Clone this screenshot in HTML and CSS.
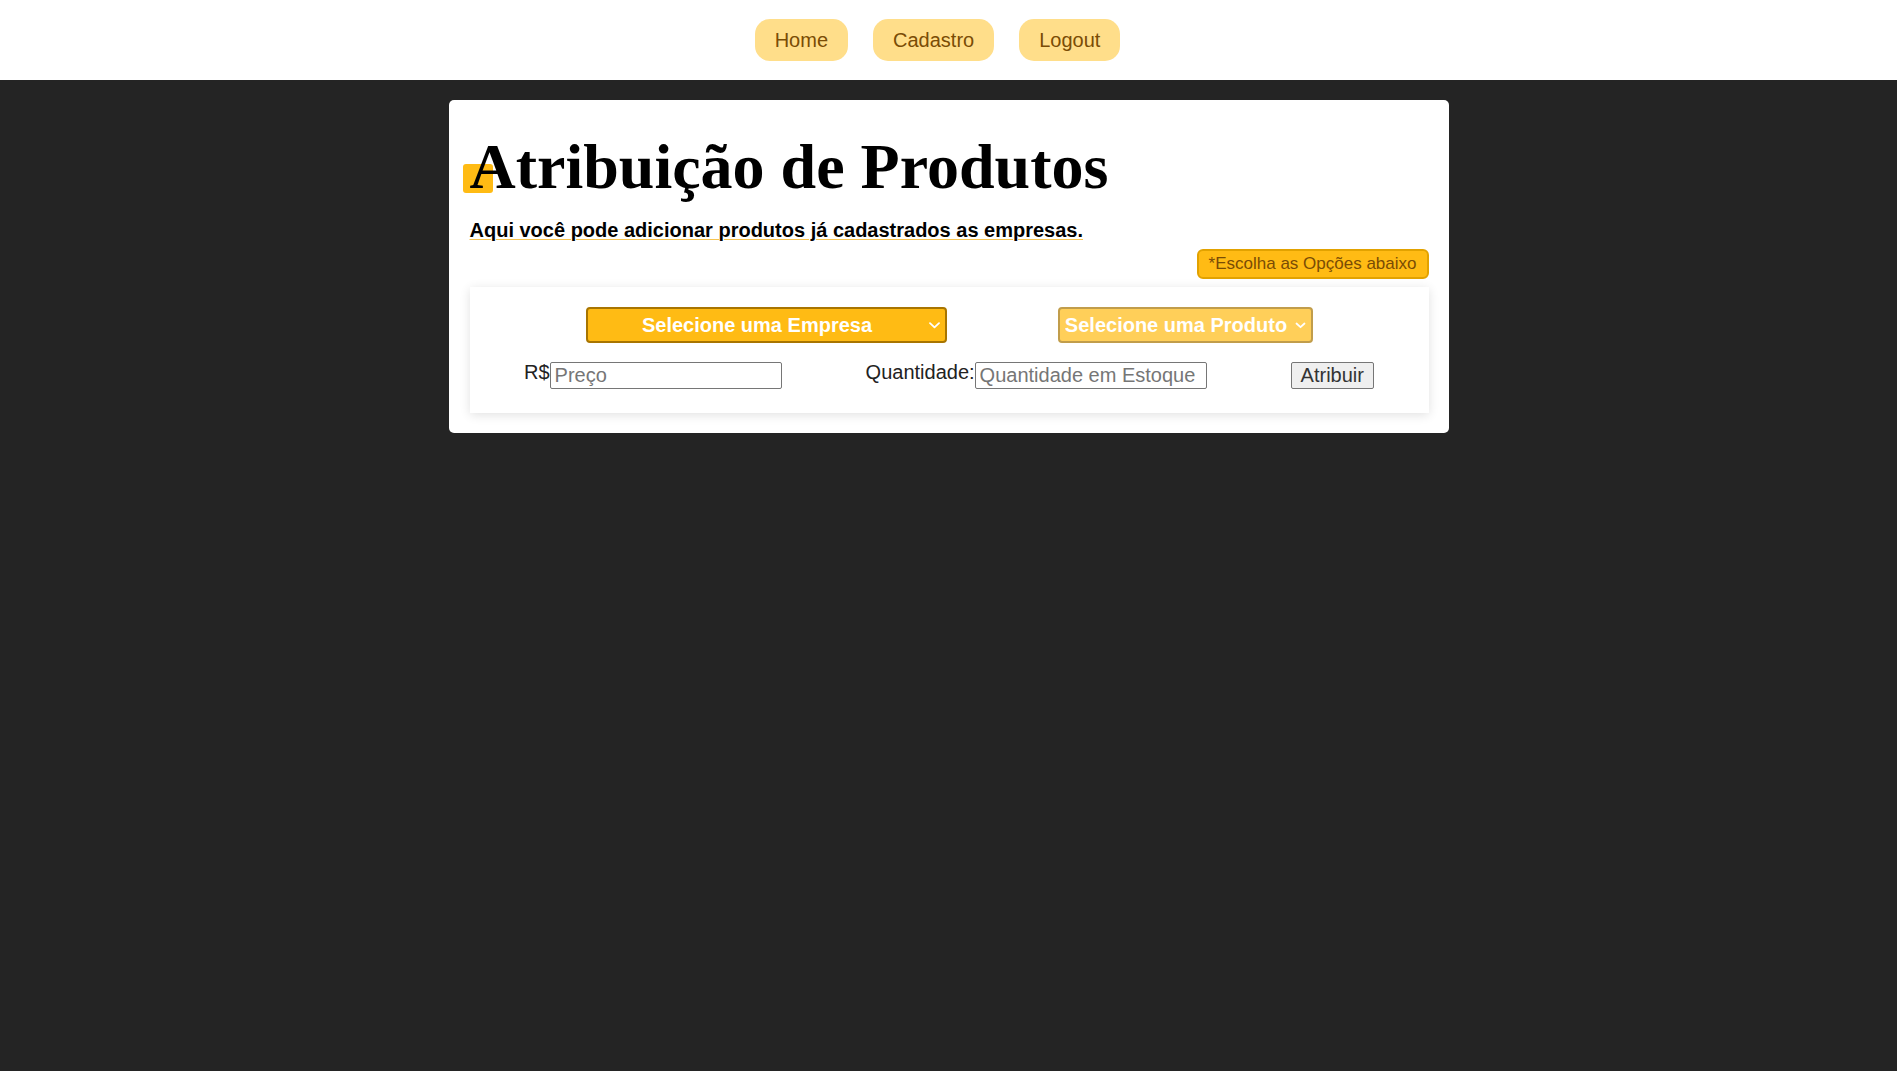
FILE: index.html
```
<!DOCTYPE html>
<html lang="pt-BR">
<head>
<meta charset="utf-8">
<title>Atribuição de Produtos</title>
<link rel="stylesheet" href="styles.css">
</head>
<body>
<header class="topbar">
  <nav class="nav">
    <a class="nav-btn" href="#">Home</a>
    <a class="nav-btn" href="#">Cadastro</a>
    <a class="nav-btn" href="#">Logout</a>
  </nav>
</header>
<main class="card">
  <h1 class="title">Atribuição de Produtos</h1>
  <p class="subtitle">Aqui você pode adicionar produtos já cadastrados as empresas.</p>
  <div class="hint-row"><span class="hint">*Escolha as Opções abaixo</span></div>
  <section class="panel">
    <div class="row row-selects">
      <div class="select-wrap select-wrap-wide">
        <select class="select">
          <option>Selecione uma Empresa</option>
        </select>
        <svg class="chevron" width="11" height="7" viewBox="0 0 11 7"><path d="M1 1.2 L5.5 5.4 L10 1.2" fill="none" stroke="#fff" stroke-width="1.8" stroke-linecap="round" stroke-linejoin="round"/></svg>
      </div>
      <div class="select-wrap select-wrap-disabled">
        <select class="select" disabled>
          <option>Selecione uma Produto</option>
        </select>
        <svg class="chevron" width="11" height="7" viewBox="0 0 11 7"><path d="M1.5 1.5 L5.5 5.2 L9.5 1.5" fill="none" stroke="#fff" stroke-width="1.8" stroke-linecap="round" stroke-linejoin="round"/></svg>
      </div>
    </div>
    <div class="row row-inputs">
      <div class="field"><span class="label">R$</span><input class="input" type="text" placeholder="Preço"></div>
      <div class="field"><span class="label">Quantidade:</span><input class="input" type="text" placeholder="Quantidade em Estoque"></div>
      <button class="btn" type="button">Atribuir</button>
    </div>
  </section>
</main>
</body>
</html>
```
FILE: styles.css
```
* { box-sizing: border-box; }

html, body {
  margin: 0;
  padding: 0;
}

body {
  background: #242424;
  font-family: "Liberation Sans", Arial, sans-serif;
  color: #222;
  min-height: 1071px;
}

.topbar {
  background: #fff;
  height: 80px;
  display: flex;
  align-items: center;
  justify-content: center;
}

.nav {
  display: flex;
  justify-content: center;
  padding-left: 3px;
}

.nav-btn {
  display: block;
  margin-right: 25px;
  padding: 0 20px;
  height: 42px;
  line-height: 42px;
  font-size: 20px;
  color: #7a4c05;
  background: #ffde8a;
  border-radius: 15px;
  text-decoration: none;
}

.card {
  width: 1000px;
  margin: 20px auto 0;
  padding: 20px 20px 20px 21px;
  background: #fff;
  border-radius: 5px;
}

.title {
  position: relative;
  z-index: 0;
  margin: 10px 0 0;
  font-family: "Liberation Serif", "Times New Roman", serif;
  font-weight: bold;
  font-size: 64px;
  line-height: 74px;
  color: #000;
}

.title::before {
  content: "";
  position: absolute;
  z-index: -1;
  left: -7px;
  top: 34px;
  width: 30px;
  height: 29px;
  background: #ffbb14;
  border-radius: 3px;
}

.subtitle {
  margin: 15px 0 0;
  font-size: 20px;
  line-height: 23px;
  font-weight: bold;
  color: #000;
  text-decoration: underline;
  text-decoration-color: #f6c451;
  text-decoration-thickness: 1px;
  text-underline-offset: 2px;
}

.hint-row {
  display: flex;
  justify-content: flex-end;
  margin-top: 7px;
}

.hint {
  display: block;
  height: 30px;
  line-height: 26px;
  padding: 0 10px;
  font-size: 17px;
  color: #7a4c05;
  background: #ffbb14;
  border: 2px solid #e2a200;
  border-radius: 6px;
}

.panel {
  margin-top: 8px;
  background: #fff;
  box-shadow: 0 2px 10px rgba(0, 0, 0, 0.12);
  padding: 20px 0 24px;
  display: flex;
  flex-direction: column;
  gap: 19px;
}

.row {
  display: flex;
  justify-content: center;
}

.row-selects {
  gap: 111px;
}

.row-inputs {
  gap: 84px;
  align-items: flex-start;
}

.select-wrap {
  position: relative;
  height: 36px;
}

.select-wrap-disabled {
  opacity: 0.7;
}

.select {
  appearance: none;
  -webkit-appearance: none;
  height: 36px;
  margin: 0;
  padding: 0 23px 0 5px;
  font-family: "Liberation Sans", Arial, sans-serif;
  font-weight: bold;
  font-size: 20px;
  color: #fff;
  background: #ffbb14;
  border: 2px solid #a87500;
  border-radius: 4px;
  text-align: center;
  text-align-last: center;
  opacity: 1;
}

.select:disabled {
  color: #fff;
  opacity: 1;
}

.select-wrap-wide .select {
  width: 361px;
}

.chevron {
  position: absolute;
  right: 7px;
  top: 15px;
  pointer-events: none;
}

.field {
  display: flex;
  align-items: flex-start;
}

.label {
  font-size: 20px;
  line-height: 23px;
  color: #222;
  margin-top: -1px;
}

.input {
  width: 232px;
  height: 27px;
  margin: 0;
  padding: 1px 4px;
  font-family: "Liberation Sans", Arial, sans-serif;
  font-size: 20px;
  line-height: 23px;
  color: #222;
  border: 1px solid #767676;
  border-radius: 2px;
  background: #fff;
}

.input::placeholder {
  color: #767676;
}

.btn {
  height: 27px;
  margin: 0;
  padding: 0 9px;
  font-family: "Liberation Sans", Arial, sans-serif;
  font-size: 20px;
  line-height: 23px;
  color: #333;
  background: #efefef;
  border: 1px solid #767676;
  border-radius: 2px;
}
```
